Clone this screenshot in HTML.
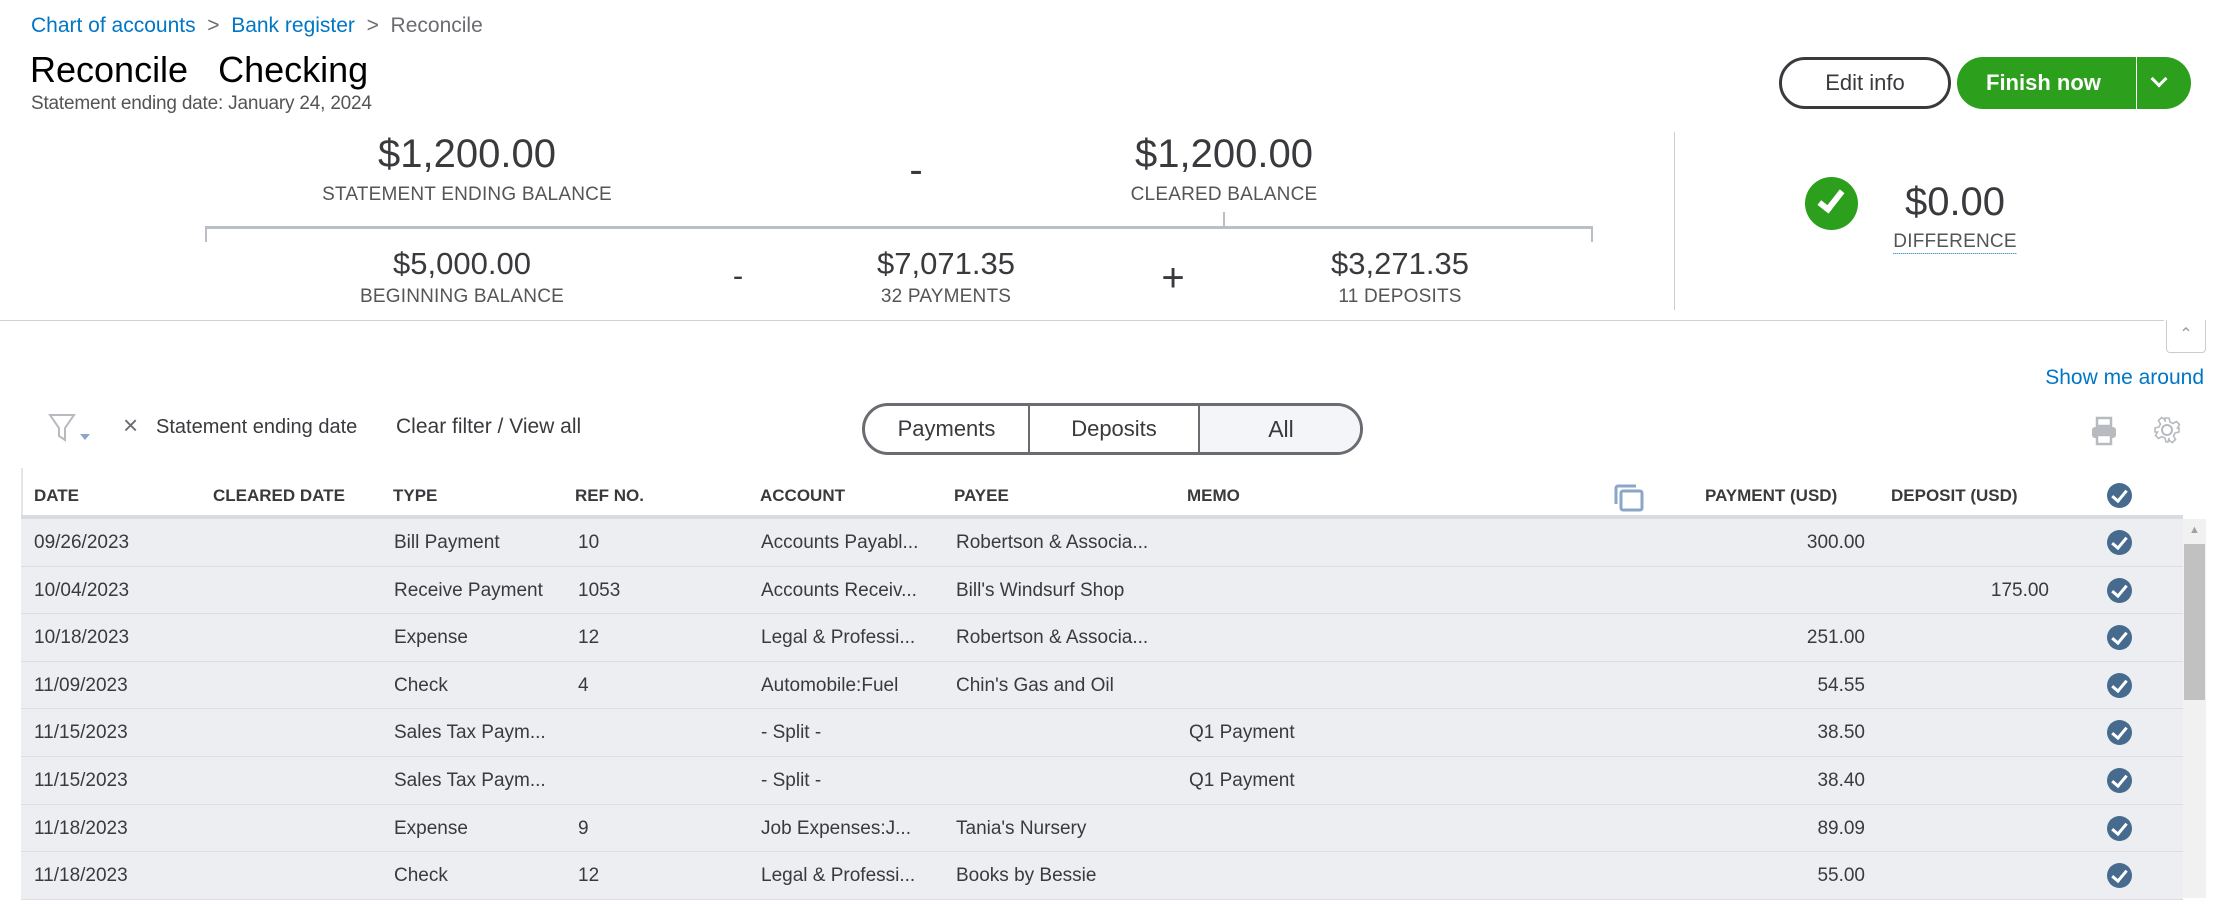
<!DOCTYPE html>
<html><head><meta charset="utf-8"><style>
*{margin:0;padding:0;box-sizing:border-box}
body{width:2226px;height:898px;overflow:hidden;background:#fff;font-family:"Liberation Sans",sans-serif;color:#393a3d;position:relative}
.a{position:absolute;white-space:nowrap}
.c{transform:translateX(-50%);text-align:center}
.big{font-size:40px;color:#393a3d}
.mid{font-size:31px}
.lbl{font-size:19px;color:#555;letter-spacing:0.2px}
.hd{font-size:17px;font-weight:bold;color:#393a3d;top:486px}
.row{position:absolute;left:21px;width:2162px;height:47.6px;background:#eceef1;border-bottom:1px solid #dcdee2;font-size:19px;color:#393a3d}
.row span{position:absolute;top:13px;white-space:nowrap}
.ck{position:absolute;width:25px;height:25px;border-radius:50%;background:#466b8e}
.ck:after{content:"";position:absolute;left:8px;top:4px;width:6px;height:12px;border:solid #fff;border-width:0 3px 3px 0;transform:rotate(40deg)}
</style></head><body>
<div class="a" style="left:31px;top:14px;font-size:21px;color:#0077c5">Chart of accounts <span style="color:#6b6c72">&nbsp;&gt;&nbsp;</span> Bank register <span style="color:#6b6c72">&nbsp;&gt;&nbsp;</span> <span style="color:#6b6c72">Reconcile</span></div>
<div class="a" style="left:30px;top:49px;font-size:36px;color:#000">Reconcile &nbsp;&nbsp;Checking</div>
<div class="a" style="left:31px;top:93px;font-size:19px;color:#555;letter-spacing:-0.2px">Statement ending date: January 24, 2024</div>

<div class="a c big" style="left:467px;top:132px">$1,200.00</div>
<div class="a c lbl" style="left:467px;top:184px">STATEMENT ENDING BALANCE</div>
<div class="a c big" style="left:916px;top:148px">-</div>
<div class="a c big" style="left:1224px;top:132px">$1,200.00</div>
<div class="a c lbl" style="left:1224px;top:184px">CLEARED BALANCE</div>
<div class="a" style="left:205px;top:226px;width:1388px;height:3px;background:#babec5"></div>
<div class="a" style="left:205px;top:226px;width:2px;height:16px;background:#babec5"></div>
<div class="a" style="left:1591px;top:226px;width:2px;height:16px;background:#babec5"></div>
<div class="a" style="left:1223px;top:212px;width:2px;height:15px;background:#babec5"></div>
<div class="a c mid" style="left:462px;top:246px">$5,000.00</div>
<div class="a c lbl" style="left:462px;top:286px">BEGINNING BALANCE</div>
<div class="a c mid" style="left:738px;top:258px">-</div>
<div class="a c mid" style="left:946px;top:246px">$7,071.35</div>
<div class="a c lbl" style="left:946px;top:286px">32 PAYMENTS</div>
<div class="a c" style="left:1173px;top:256px;font-size:40px;font-weight:300">+</div>
<div class="a c mid" style="left:1400px;top:246px">$3,271.35</div>
<div class="a c lbl" style="left:1400px;top:286px">11 DEPOSITS</div>
<div class="a" style="left:1674px;top:132px;width:1px;height:178px;background:#ccc"></div>

<div class="a" style="left:1805px;top:177px;width:53px;height:53px;border-radius:50%;background:#2ca01c"></div>
<div class="a" style="left:1824px;top:186px;width:14px;height:26px;border:solid #fff;border-width:0 6px 6px 0;transform:rotate(38deg)"></div>
<div class="a c big" style="left:1955px;top:180px">$0.00</div>
<div class="a c lbl" style="left:1955px;top:231px;border-bottom:1px dotted #0077c5">DIFFERENCE</div>

<div class="a" style="left:1779px;top:57px;width:172px;height:52px;border:3px solid #393a3d;border-radius:26px;font-size:22px;text-align:center;line-height:46px;color:#393a3d">Edit info</div>
<div class="a" style="left:1957px;top:57px;width:234px;height:52px;background:#2ca01c;border-radius:26px;color:#fff;font-size:22px;font-weight:bold"><span style="position:absolute;left:29px;top:13px">Finish now</span><span style="position:absolute;left:179px;top:0;width:1px;height:52px;background:#fff"></span><span style="position:absolute;left:196px;top:16px;width:12px;height:12px;border:solid #fff;border-width:0 3px 3px 0;transform:rotate(45deg)"></span></div>

<div class="a" style="left:0;top:320px;width:2164px;height:1px;background:#cfd1d5"></div>
<div class="a" style="left:2166px;top:320px;width:40px;height:33px;border:1px solid #ccc;border-top:none;border-radius:0 0 4px 4px;color:#999;font-size:16px;text-align:center;line-height:30px">&#8963;</div>
<div class="a" style="right:22px;top:366px;font-size:21px;color:#0077c5">Show me around</div>

<svg class="a" style="left:48px;top:412px" width="44" height="34" viewBox="0 0 44 34"><path d="M2 3h24L17 16v12l-6-4V16z" fill="none" stroke="#b7bac0" stroke-width="2"/><path d="M32 22h10l-5 6z" fill="#8aa6c8"/></svg>
<div class="a" style="left:123px;top:410px;font-size:26px;color:#6b6c72">×</div>
<div class="a" style="left:156px;top:416px;font-size:20px;color:#393a3d">Statement ending date</div>
<div class="a" style="left:396px;top:415px;font-size:21px;color:#393a3d">Clear filter / View all</div>

<div class="a" style="left:862px;top:403px;width:501px;height:52px;border:3px solid #6b6c72;border-radius:26px;overflow:hidden;font-size:22px">
<div class="a" style="left:0;top:0;width:165px;height:46px;line-height:46px;text-align:center;border-right:2px solid #6b6c72">Payments</div>
<div class="a" style="left:165px;top:0;width:170px;height:46px;line-height:46px;text-align:center;border-right:2px solid #6b6c72">Deposits</div>
<div class="a" style="left:335px;top:0;width:162px;height:46px;line-height:46px;text-align:center;background:#f4f5f8;font-size:23px">All</div>
</div>

<svg class="a" style="left:2090px;top:416px" width="28" height="30" viewBox="0 0 28 30"><rect x="7" y="2" width="14" height="8" fill="none" stroke="#b7bac0" stroke-width="2.5"/><rect x="2" y="11" width="24" height="11" rx="3" fill="#b7bac0"/><rect x="7" y="19" width="14" height="9" fill="#fff" stroke="#b7bac0" stroke-width="2.5"/></svg>
<svg class="a" style="left:2153px;top:416px" width="28" height="28" viewBox="0 0 28 28"><circle cx="14" cy="14" r="5" fill="none" stroke="#b7bac0" stroke-width="2"/><path d="M12 2h4l1 4 3 1.5 3.5-2 3 3-2 3.5L26 12v4l-4 1-1.5 3 2 3.5-3 3-3.5-2L16 22l-1 4h-2l-1-4-3-1.5-3.5 2-3-3 2-3.5L4 16H2v-4l4-1 1.5-3-2-3.5 3-3 3.5 2L12 6z" fill="none" stroke="#b7bac0" stroke-width="1.6"/></svg>

<div class="a" style="left:21px;top:468px;width:2px;height:50px;background:#e3e5e8"></div>
<div class="a" style="left:21px;top:515px;width:2162px;height:4px;background:#d8dbe0"></div>
<div class="a hd" style="left:34px">DATE</div>
<div class="a hd" style="left:213px">CLEARED DATE</div>
<div class="a hd" style="left:393px">TYPE</div>
<div class="a hd" style="left:575px">REF NO.</div>
<div class="a hd" style="left:760px">ACCOUNT</div>
<div class="a hd" style="left:954px">PAYEE</div>
<div class="a hd" style="left:1187px">MEMO</div>
<svg class="a" style="left:1613px;top:484px" width="32" height="28" viewBox="0 0 32 28"><path d="M3 20V4a2 2 0 0 1 2-2h18" fill="none" stroke="#8aa6c8" stroke-width="3"/><rect x="8" y="7" width="21" height="19" rx="2" fill="none" stroke="#8aa6c8" stroke-width="3"/></svg>
<div class="a hd" style="left:1705px">PAYMENT (USD)</div>
<div class="a hd" style="left:1891px">DEPOSIT (USD)</div>
<div class="ck" style="left:2107px;top:483px"></div>

<div class="row" style="top:519px"><span style="left:13px">09/26/2023</span><span style="left:373px">Bill Payment</span><span style="left:557px">10</span><span style="left:740px">Accounts Payabl...</span><span style="left:935px">Robertson &amp; Associa...</span><span style="right:318px">300.00</span><div class="ck" style="left:2086px;top:11px"></div></div>
<div class="row" style="top:566.6px"><span style="left:13px">10/04/2023</span><span style="left:373px">Receive Payment</span><span style="left:557px">1053</span><span style="left:740px">Accounts Receiv...</span><span style="left:935px">Bill's Windsurf Shop</span><span style="right:134px">175.00</span><div class="ck" style="left:2086px;top:11px"></div></div>
<div class="row" style="top:614.2px"><span style="left:13px">10/18/2023</span><span style="left:373px">Expense</span><span style="left:557px">12</span><span style="left:740px">Legal &amp; Professi...</span><span style="left:935px">Robertson &amp; Associa...</span><span style="right:318px">251.00</span><div class="ck" style="left:2086px;top:11px"></div></div>
<div class="row" style="top:661.8px"><span style="left:13px">11/09/2023</span><span style="left:373px">Check</span><span style="left:557px">4</span><span style="left:740px">Automobile:Fuel</span><span style="left:935px">Chin's Gas and Oil</span><span style="right:318px">54.55</span><div class="ck" style="left:2086px;top:11px"></div></div>
<div class="row" style="top:709.4px"><span style="left:13px">11/15/2023</span><span style="left:373px">Sales Tax Paym...</span><span style="left:740px">- Split -</span><span style="left:1168px">Q1 Payment</span><span style="right:318px">38.50</span><div class="ck" style="left:2086px;top:11px"></div></div>
<div class="row" style="top:757px"><span style="left:13px">11/15/2023</span><span style="left:373px">Sales Tax Paym...</span><span style="left:740px">- Split -</span><span style="left:1168px">Q1 Payment</span><span style="right:318px">38.40</span><div class="ck" style="left:2086px;top:11px"></div></div>
<div class="row" style="top:804.6px"><span style="left:13px">11/18/2023</span><span style="left:373px">Expense</span><span style="left:557px">9</span><span style="left:740px">Job Expenses:J...</span><span style="left:935px">Tania's Nursery</span><span style="right:318px">89.09</span><div class="ck" style="left:2086px;top:11px"></div></div>
<div class="row" style="top:852.2px"><span style="left:13px">11/18/2023</span><span style="left:373px">Check</span><span style="left:557px">12</span><span style="left:740px">Legal &amp; Professi...</span><span style="left:935px">Books by Bessie</span><span style="right:318px">55.00</span><div class="ck" style="left:2086px;top:11px"></div></div>

<div class="a" style="left:2183px;top:519px;width:23px;height:379px;background:#f1f1f1"></div>
<div class="a" style="left:2189px;top:524px;font-size:11px;color:#a0a0a0">▲</div>
<div class="a" style="left:2184px;top:544px;width:21px;height:156px;background:#c1c1c1"></div>
</body></html>
